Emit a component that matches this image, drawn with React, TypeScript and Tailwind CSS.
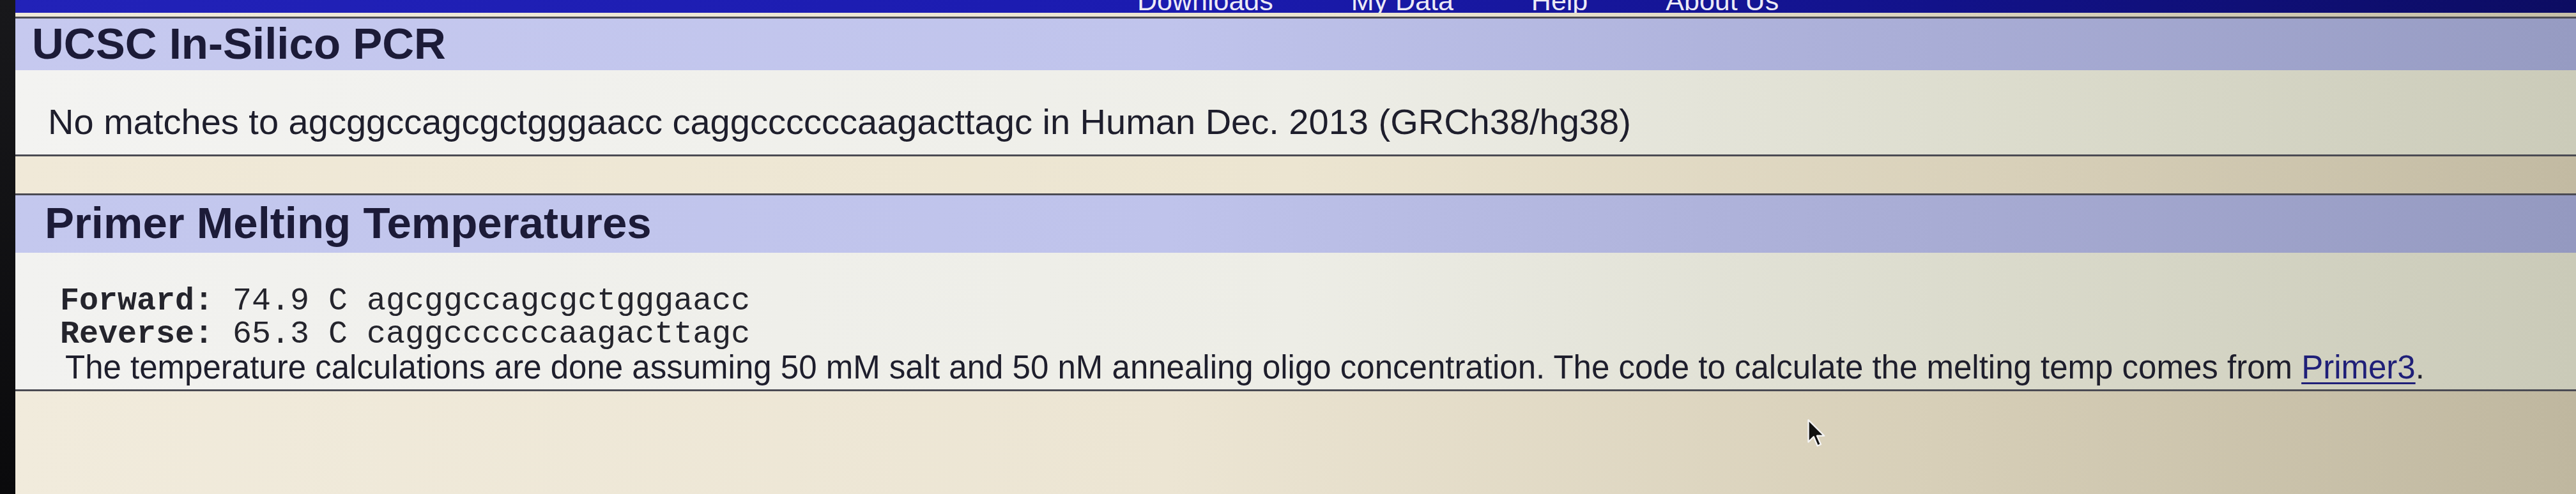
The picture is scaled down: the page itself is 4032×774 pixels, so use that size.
import React from "react";

const navLinks = ["Downloads", "My Data", "Help", "About Us"];

function Divider() {
  return <div className="h-[3px] w-full bg-[#4b4b53]" />;
}

function Cursor() {
  return (
    <svg
      className="absolute left-[2829px] top-[656px]"
      width="30"
      height="46"
      viewBox="0 0 20 30"
    >
      <path
        d="M1 1 L1 24 L6.5 18.5 L10.5 28 L14 26.5 L10 17.5 L17.5 17.5 Z"
        fill="#111"
        stroke="#f4f4f4"
        strokeWidth="1.6"
        strokeLinejoin="round"
      />
    </svg>
  );
}

export default function App() {
  return (
    <div className="relative flex h-[774px] w-[4032px] overflow-hidden bg-[#0c0c0e] font-['Liberation_Sans',Arial,sans-serif] text-[#1e1e2c]">
      <div className="w-[24px] shrink-0 bg-[linear-gradient(180deg,#18181b_0%,#0a0a0c_100%)]" />

      <div className="flex min-w-0 flex-1 flex-col">
        {/* top nav, cut off at the top edge of the photo */}
        <div className="flex h-[20px] shrink-0 overflow-hidden bg-[linear-gradient(90deg,#2222b8_0%,#1b1bb0_45%,#12128a_75%,#0c0c62_100%)] pl-[1756px]">
          <div className="-mt-[20px] flex gap-[122px] text-[43px] leading-none text-[#eceaf6]">
            {navLinks.map((l) => (
              <span key={l}>{l}</span>
            ))}
          </div>
        </div>
        <div className="h-[6px] shrink-0 bg-[linear-gradient(90deg,#efe9d9_0%,#ebe4d0_55%,#c6bfa8_100%)]" />
        <Divider />

        {/* PCR result */}
        <div className="h-[81px] shrink-0 bg-[linear-gradient(90deg,#c6c9ef_0%,#c0c4ec_45%,#a9add6_75%,#969bc2_100%)] pl-[26px] pt-[5px]">
          <h1 className="text-[69px] font-bold leading-none text-[#1c1b38]">UCSC In-Silico PCR</h1>
        </div>
        <div className="h-[132px] shrink-0 bg-[linear-gradient(90deg,#f3f3f1_0%,#eeeee8_50%,#dcdccd_78%,#cbcbb9_100%)] pl-[51px] pt-[53px]">
          <p className="whitespace-nowrap text-[56px] leading-none">
            No matches to agcggccagcgctgggaacc caggccccccaagacttagc in Human Dec. 2013 (GRCh38/hg38)
          </p>
        </div>
        <Divider />
        <div className="h-[58px] shrink-0 bg-[linear-gradient(90deg,#f0e9d8_0%,#ece5d1_50%,#d8d0b9_78%,#c2baa2_100%)]" />
        <Divider />

        {/* melting temperatures */}
        <div className="h-[90px] shrink-0 bg-[linear-gradient(90deg,#c4c8ee_0%,#bfc3eb_45%,#a8acd4_75%,#9499c0_100%)] pl-[46px] pt-[9px]">
          <h2 className="text-[69px] font-bold leading-none text-[#1c1b38]">Primer Melting Temperatures</h2>
        </div>
        <div className="h-[214px] shrink-0 bg-[linear-gradient(90deg,#f2f2f0_0%,#ededE6_50%,#dadacb_78%,#cacab8_100%)] pl-[70px] pt-[50px]">
          <div className="whitespace-pre font-['Liberation_Mono','Courier_New',monospace] text-[50px] leading-[52px] text-[#24242c]">
            <div>
              <b>Forward:</b> 74.9 C agcggccagcgctgggaacc
            </div>
            <div>
              <b>Reverse:</b> 65.3 C caggccccccaagacttagc
            </div>
          </div>
          <p className="whitespace-nowrap pl-[8px] text-[51px] leading-none">
            The temperature calculations are done assuming 50 mM salt and 50 nM annealing oligo concentration. The code to
            calculate the melting temp comes from{" "}
            <a href="#" className="text-[#1f1f78] underline decoration-[3px] underline-offset-[6px]">
              Primer3
            </a>
            .
          </p>
        </div>
        <Divider />
        <div className="flex-1 bg-[linear-gradient(90deg,#f1ebdc_0%,#ece5d3_45%,#d7cfb8_75%,#bfb79f_100%)]" />
      </div>

      <Cursor />
    </div>
  );
}
